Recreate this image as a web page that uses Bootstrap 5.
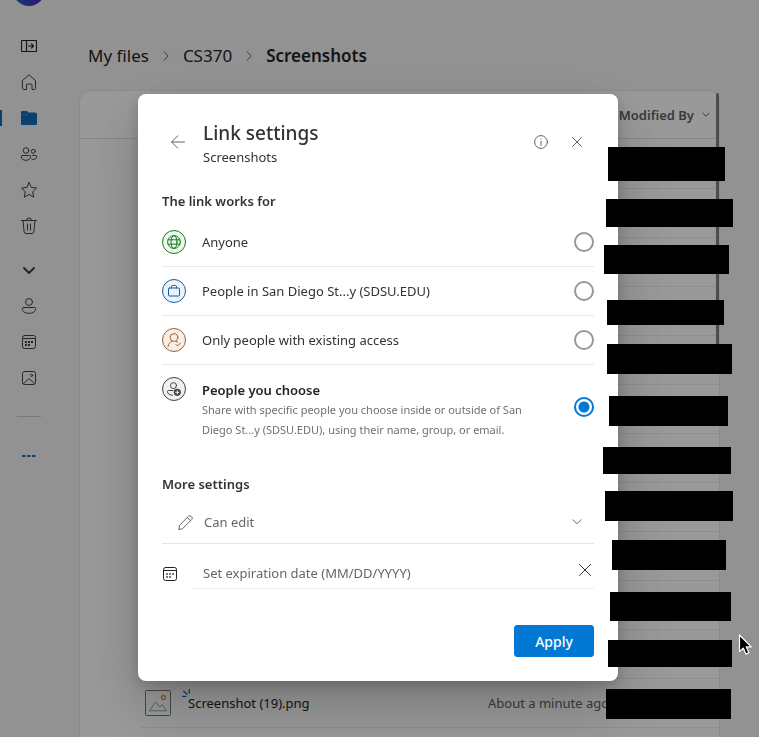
<!DOCTYPE html>
<html lang="en">
<head>
<meta charset="utf-8">
<meta name="viewport" content="width=device-width, initial-scale=1">
<title>Link settings</title>
<link href="https://cdn.jsdelivr.net/npm/bootstrap@5.3.0/dist/css/bootstrap.min.css" rel="stylesheet">
<style>
  body { font-family: "Noto Sans", "Open Sans", sans-serif; font-size: 13px; line-height: 20px; color: #333; background: #f3f3f3; }
  svg { display: block; fill: none; stroke: currentColor; stroke-linecap: round; stroke-linejoin: round; }
  button, select, input { font: inherit; color: inherit; }

  .side-rail { width: 58px; color: #424242; }
  .avatar { width: 32px; height: 32px; margin: -26px 0 22px; background: linear-gradient(90deg, #2a5ad0, #4a2ab0); }
  .rail-link { width: 58px; height: 36px; color: inherit; }
  .rail-link.active { color: #0f6cbd; }
  .rail-link.active::before { content: ""; position: absolute; left: 0; top: 10px; width: 2px; height: 16px; background: #0f6cbd; }
  .rail-toggle { margin-top: 8px; }
  .rail-line { width: 24px; height: 1px; margin: 20px 0 21px; background: #c8c8c8; }

  .files-area { padding: 42px 39px 0 21px; }
  .crumbs { font-size: 17px; line-height: 28px; margin: 0 0 20px 9px; gap: 13px; }
  .crumbs a, .crumbs .here { color: #242424; }
  .files-card { height: 800px; background: #fff; border: 1px solid #e8e8e8; border-radius: 12px; }
  .files-head { height: 48px; border-bottom: 1px solid #e0e0e0; color: #616161; padding-right: 9px; }
  .files-table { table-layout: fixed; color: #616161; }
  .files-table td { height: 49px; padding: 0; border-bottom: 1px solid #ededed; white-space: nowrap; }
  .files-table td:first-child { border-bottom: 0; }
  .col-pick { width: 60px; } .col-kind { width: 48px; } .col-who { width: 99px; } .col-when { width: 132px; }
  .file-link { color: #242424; }
  .file-pic { margin-left: 5px; }
  .new-spark { left: -6px; top: -5px; }
  .scroll-thumb { right: 0; top: 2px; width: 3px; height: 252px; border-radius: 2px; background: #808080; }

  .shade { background: rgba(0, 0, 0, .4); z-index: 1050; }
  .link-modal { padding-right: 3px; }
  .link-modal .modal-dialog { max-width: 480px; margin: 94px auto 24px; }
  .link-modal .modal-content { padding: 25px 24px 24px; border: 0; border-radius: 8px; color: #333; box-shadow: 0 26px 58px rgba(0, 0, 0, .22), 0 5px 14px rgba(0, 0, 0, .18); }
  .plain-btn { width: 32px; height: 32px; color: #616161; border: 0; background: none; padding: 0; }
  .dialog-head { gap: 9px; padding-right: 1px; margin-bottom: 24px; }
  .dialog-head .plain-btn { margin-bottom: 2px; }
  .dialog-title { font-size: 19px; line-height: 28px; font-weight: 500; margin: 0; }
  .section-name { font-size: 13px; line-height: 20px; font-weight: 600; margin: 0 0 7px; float: none; }
  .more-name { margin-top: 25px; }
  .choice { height: 49px; border-bottom: 1px solid #eaeaea; gap: 16px; }
  .choice-tall { height: 84px; border-bottom: 0; }
  .choice-tall .choice-text { padding-top: 15px; align-self: flex-start; }
  .choice-tall .choice-badge { margin-top: 12px; align-self: flex-start; }
  .choice-badge { width: 24px; height: 24px; border: 1px solid; flex: none; }
  .b-green { color: #107c10; background: #f1f7f1; } .b-blue { color: #115ea3; background: #ecf4fa; }
  .b-brown { color: #a0603a; background: #f8eee8; } .b-gray { color: #424242; background: #f0f0f0; }
  .choice-note { font-size: 11px; color: #707070; display: block; max-width: 340px; }
  .choice .form-check-input { width: 20px; height: 20px; border: 2px solid #979797; background: #fff; margin: 0; float: none; flex: none; box-shadow: none; }
  .choice .form-check-input:checked { border-color: #0078d4; background: radial-gradient(circle, #0078d4 5px, #fff 6px); }
  .perm-row { height: 43px; border-bottom: 1px solid #e6e6e6; padding: 0 12px 0 16px; color: #666; }
  .perm-row select { appearance: none; border: 0; background: none; padding: 0; margin-left: 11px; }
  .date-row { margin-top: 14px; gap: 13px; }
  .date-box { height: 31px; border-bottom: 1px solid #eee; padding-left: 12px; }
  .date-box input { border: 0; background: none; padding: 0; min-width: 0; outline: 0; }
  .date-box input::placeholder { color: #666; opacity: 1; }
  .clear-btn { width: 18px; height: 24px; color: #333; }
  .apply-btn { --bs-btn-bg: #0078d4; --bs-btn-border-color: #0078d4; --bs-btn-border-radius: 3px; width: 80px; height: 32px; margin-top: 36px; padding: 0; font-size: 14px; font-weight: 500; }

  /* Blocks that hide the names in the last column */
  .masks { z-index: 1060; pointer-events: none; }
  .masks i { position: absolute; background: #000; }
  .masks i:nth-child(1) { left: 608px; top: 147px; width: 117px; height: 34px; }
  .masks i:nth-child(2) { left: 606px; top: 199px; width: 127px; height: 28px; }
  .masks i:nth-child(3) { left: 604px; top: 245px; width: 125px; height: 29px; }
  .masks i:nth-child(4) { left: 607px; top: 300px; width: 117px; height: 25px; }
  .masks i:nth-child(5) { left: 607px; top: 344px; width: 125px; height: 30px; }
  .masks i:nth-child(6) { left: 609px; top: 396px; width: 119px; height: 30px; }
  .masks i:nth-child(7) { left: 603px; top: 447px; width: 128px; height: 27px; }
  .masks i:nth-child(8) { left: 605px; top: 491px; width: 128px; height: 30px; }
  .masks i:nth-child(9) { left: 612px; top: 540px; width: 114px; height: 30px; }
  .masks i:nth-child(10) { left: 610px; top: 592px; width: 121px; height: 29px; }
  .masks i:nth-child(11) { left: 608px; top: 640px; width: 124px; height: 27px; }
  .masks i:nth-child(12) { left: 606px; top: 689px; width: 125px; height: 30px; }
  .pointer { left: 738px; top: 634px; }
</style>
</head>
<body>
<div class="d-flex vh-100 overflow-hidden">
  <nav class="side-rail d-flex flex-column align-items-center flex-shrink-0" aria-label="Main">
    <div class="avatar rounded-circle flex-shrink-0"></div>
    <a href="#" class="rail-link d-flex align-items-center justify-content-center" aria-label="Expand"><svg width="16" height="12" viewBox="0 0 16 12" stroke-width="1.1" color="#222"><rect x=".5" y=".5" width="15" height="11" rx="1"/><path d="M5.500.5v11M7.500 6h5M10.500 4l2 2-2 2"/></svg></a>
    <a href="#" class="rail-link d-flex align-items-center justify-content-center" aria-label="Home"><svg width="16" height="16" viewBox="0 0 16 16"><path d="M1.500 6.500 8 .8l6.500 5.700v8a1 1 0 0 1-1 1h-2.500v-4.500a1 1 0 0 0-1-1H6.500a1 1 0 0 0-1 1v4.500h-3a1 1 0 0 1-1-1z"/></svg></a>
    <a href="#" class="rail-link active position-relative d-flex align-items-center justify-content-center" aria-label="My files"><svg width="16" height="14" viewBox="0 0 16 14" stroke="none"><path fill="currentColor" d="M0 2.200A2.200 2.200 0 0 1 2.200 0h2.600c.5 0 .9.200 1.300.5L7.400 1.600 5.700 3.100c-.2.200-.4.200-.6.200H0zM8.300 2h5.500A2.200 2.200 0 0 1 16 4.200v7.600A2.200 2.200 0 0 1 13.800 14H2.200A2.200 2.200 0 0 1 0 11.800V4.400h5.200c.5 0 .9-.2 1.300-.5z"/></svg></a>
    <a href="#" class="rail-link d-flex align-items-center justify-content-center" aria-label="Shared"><svg width="18" height="14" viewBox="0 0 18 14"><circle cx="6" cy="3.500" r="2.800"/><circle cx="13.300" cy="4.300" r="2"/><path d="M2.300 8.500h7.400a1 1 0 0 1 1 1c0 2.500-2 3.800-4.700 3.800S1.300 12 1.300 9.500a1 1 0 0 1 1-1zM12.700 8.500h3a1 1 0 0 1 1 1c0 2-1.500 3-3.700 3q-.6 0-1-.1"/></svg></a>
    <a href="#" class="rail-link d-flex align-items-center justify-content-center" aria-label="Favorites"><svg width="18" height="18" viewBox="0 0 18 18"><path d="m9 1.500 2.300 4.900 5.200.7-3.800 3.700 1 5.300L9 13.500l-4.700 2.600 1-5.300L1.500 7.100l5.200-.7z"/></svg></a>
    <a href="#" class="rail-link d-flex align-items-center justify-content-center" aria-label="Recycle bin"><svg width="16" height="18" viewBox="0 0 16 18"><path d="M.5 3.500h15M5.500 3.300a2.500 2.300 0 0 1 5 0M2 3.500l1.100 11.200A2 2 0 0 0 5 16.500h6a2 2 0 0 0 1.900-1.800L14 3.500M6.500 7v6M9.500 7v6"/></svg></a>
    <a href="#" class="rail-link rail-toggle d-flex align-items-center justify-content-center" aria-label="Show more"><svg width="12" height="8" viewBox="0 0 12 8" stroke-width="2"><path d="m1 2 5 5 5-5"/></svg></a>
    <a href="#" class="rail-link d-flex align-items-center justify-content-center" aria-label="People"><svg width="16" height="16" viewBox="0 0 16 16"><circle cx="8" cy="4" r="3.500"/><path d="M2.500 9.500h11a1.200 1.200 0 0 1 1.200 1.200c0 2.800-2.700 4.600-6.700 4.600s-6.700-1.800-6.700-4.600a1.200 1.200 0 0 1 1.200-1.200z"/></svg></a>
    <a href="#" class="rail-link d-flex align-items-center justify-content-center" aria-label="Meetings"><svg width="14" height="14" viewBox="0 0 14 14"><rect x=".5" y=".5" width="13" height="13" rx="2"/><path d="M.5 3.500h13"/><path stroke="none" fill="currentColor" d="M3 6h2v2H3zM6 6h2v2H6zM9 6h2v2H9zM3 9h2v2H3zM6 9h2v2H6z"/></svg></a>
    <a href="#" class="rail-link d-flex align-items-center justify-content-center" aria-label="Media"><svg width="14" height="14" viewBox="0 0 14 14"><rect x=".5" y=".5" width="13" height="13" rx="2"/><circle cx="9.600" cy="4.400" r="1.100"/><path d="m1.500 12.700 4.800-4.600a1 1 0 0 1 1.400 0l4.800 4.600"/></svg></a>
    <div class="rail-line"></div>
    <a href="#" class="rail-link d-flex align-items-center justify-content-center" aria-label="More places"><svg width="14" height="2" viewBox="0 0 14 2" color="#0f6cbd" stroke="none"><path fill="currentColor" d="M1 0h2v2H1zM6 0h2v2H6zM11 0h2v2h-2z"/></svg></a>
  </nav>

  <main class="files-area flex-grow-1">
    <nav aria-label="Breadcrumb">
      <ol class="crumbs list-unstyled d-flex align-items-center">
        <li><a href="#" class="text-decoration-none">My files</a></li>
        <li aria-hidden="true"><svg width="8" height="10" viewBox="0 0 8 10" color="#616161"><path d="m2 .8 4.200 4.200L2 9.200"/></svg></li>
        <li><a href="#" class="text-decoration-none">CS370</a></li>
        <li aria-hidden="true"><svg width="8" height="10" viewBox="0 0 8 10" color="#616161"><path d="m2 .8 4.200 4.200L2 9.200"/></svg></li>
        <li class="here fw-semibold" aria-current="page">Screenshots</li>
      </ol>
    </nav>
    <section class="files-card position-relative">
      <div class="files-head d-flex align-items-center justify-content-end gap-2 fw-semibold">Modified By <svg width="8" height="6" viewBox="0 0 8 6"><path d="m1 1.200 3 3 3-3"/></svg></div>
      <table class="files-table w-100">
        <colgroup><col class="col-pick"><col class="col-kind"><col><col class="col-when"><col class="col-who"></colgroup>
        <tbody>
          <tr><td></td><td></td><td></td><td></td><td></td></tr>
          <tr><td></td><td></td><td></td><td></td><td></td></tr>
          <tr><td></td><td></td><td></td><td></td><td></td></tr>
          <tr><td></td><td></td><td></td><td></td><td></td></tr>
          <tr><td></td><td></td><td></td><td></td><td></td></tr>
          <tr><td></td><td></td><td></td><td></td><td></td></tr>
          <tr><td></td><td></td><td></td><td></td><td></td></tr>
          <tr><td></td><td></td><td></td><td></td><td></td></tr>
          <tr><td></td><td></td><td></td><td></td><td></td></tr>
          <tr><td></td><td></td><td></td><td></td><td></td></tr>
          <tr><td></td><td></td><td></td><td></td><td></td></tr>
          <tr>
            <td></td>
            <td><svg class="file-pic" width="26" height="26" viewBox="0 0 26 26"><rect x=".5" y=".5" width="25" height="25" rx="1" stroke="#777"/><circle cx="18.500" cy="7.500" r="2" stroke="#e8912d" stroke-width="1.300"/><path d="M4.500 20.500 10.700 12l4 5.200 2.300-2.600 4.500 5.900z" stroke="#7fb5a5"/></svg></td>
            <td><span class="position-relative"><svg class="new-spark position-absolute" width="8" height="8" viewBox="0 0 8 8" color="#0f6cbd" stroke-width="1.300"><path d="M0 7.300h4M1.800 2.200 5 5.200M7.300 0v4"/></svg><a href="#" class="file-link text-decoration-none">Screenshot (19).png</a></span></td>
            <td>About a minute ago</td>
            <td></td>
          </tr>
        </tbody>
      </table>
      <div class="scroll-thumb position-absolute"></div>
    </section>
  </main>
</div>

<div class="shade position-fixed top-0 start-0 w-100 h-100"></div>

<div class="link-modal modal d-block" role="dialog" aria-labelledby="dialogTitle">
  <div class="modal-dialog">
    <form class="modal-content">
      <header class="dialog-head d-flex align-items-center">
        <button type="button" class="plain-btn d-flex align-items-center justify-content-center" aria-label="Back"><svg width="14" height="14" viewBox="0 0 14 14"><path d="M13.500 7H.8M6.800.8.600 7l6.200 6.200"/></svg></button>
        <div class="flex-grow-1">
          <h1 class="dialog-title" id="dialogTitle">Link settings</h1>
          <div>Screenshots</div>
        </div>
        <div class="d-flex gap-1">
          <button type="button" class="plain-btn d-flex align-items-center justify-content-center" aria-label="Information"><svg width="14" height="14" viewBox="0 0 14 14"><circle cx="7" cy="7" r="6.400"/><path d="M7 6.300v4M7 3.900V4"/></svg></button>
          <button type="button" class="plain-btn d-flex align-items-center justify-content-center" aria-label="Close"><svg width="10" height="10" viewBox="0 0 10 10"><path d="m.5.5 9 9M9.500.5l-9 9"/></svg></button>
        </div>
      </header>

      <fieldset>
        <legend class="section-name">The link works for</legend>
        <div class="choice d-flex align-items-center">
          <span class="choice-badge b-green rounded-circle d-flex align-items-center justify-content-center"><svg width="14" height="14" viewBox="0 0 14 14"><circle cx="7" cy="7" r="6.400"/><ellipse cx="7" cy="7" rx="3" ry="6.400"/><path d="M1.200 4.800h11.600M1.200 9.200h11.600"/></svg></span>
          <label class="flex-grow-1" for="anyone">Anyone</label>
          <input class="form-check-input" type="radio" name="scope" id="anyone">
        </div>
        <div class="choice d-flex align-items-center">
          <span class="choice-badge b-blue rounded-circle d-flex align-items-center justify-content-center"><svg width="12" height="12" viewBox="0 0 12 12"><rect x=".5" y="3" width="11" height="8" rx="1"/><path d="M3.500 3V1.500a1 1 0 0 1 1-1h3a1 1 0 0 1 1 1V3"/></svg></span>
          <label class="flex-grow-1" for="org">People in San Diego St...y (SDSU.EDU)</label>
          <input class="form-check-input" type="radio" name="scope" id="org">
        </div>
        <div class="choice d-flex align-items-center">
          <span class="choice-badge b-brown rounded-circle d-flex align-items-center justify-content-center"><svg width="14" height="14" viewBox="0 0 14 14"><circle cx="7" cy="4.500" r="3.800"/><path d="M1 13.500c.3-2.500 1.700-4.300 4-5.200M9 11.500l1.500 1.500L13.500 10M9 8.300l1.500 1"/></svg></span>
          <label class="flex-grow-1" for="existing">Only people with existing access</label>
          <input class="form-check-input" type="radio" name="scope" id="existing">
        </div>
        <div class="choice choice-tall d-flex align-items-center">
          <span class="choice-badge b-gray rounded-circle d-flex align-items-center justify-content-center"><svg width="14" height="14" viewBox="0 0 14 14"><circle cx="6.500" cy="3.600" r="3"/><path d="M6 8.500H1.500a1 1 0 0 0-1 1c0 2.300 2 3.600 5 3.800"/><circle cx="10.300" cy="10.300" r="3.200" fill="currentColor"/><path d="M10.300 8.700v3.200M8.700 10.300h3.200" stroke="#f0f0f0"/></svg></span>
          <label class="choice-text flex-grow-1" for="chosen"><span class="fw-semibold text-dark d-block">People you choose</span><span class="choice-note">Share with specific people you choose inside or outside of San Diego St...y (SDSU.EDU), using their name, group, or email.</span></label>
          <input class="form-check-input" type="radio" name="scope" id="chosen" checked>
        </div>
      </fieldset>

      <h2 class="section-name more-name">More settings</h2>
      <div class="perm-row d-flex align-items-center">
        <svg width="15" height="15" viewBox="0 0 15 15"><path d="M.8 14.200l.8-4L10.500 1.300a1.900 1.900 0 0 1 2.700 0l.5.500a1.900 1.900 0 0 1 0 2.700L4.800 13.400zM9.300 2.500l3.200 3.200"/></svg>
        <select class="flex-grow-1" aria-label="Permission"><option>Can edit</option><option>Can view</option></select>
        <svg width="10" height="6" viewBox="0 0 10 6"><path d="m1 .8 4 4 4-4"/></svg>
      </div>
      <div class="date-row d-flex align-items-center">
        <svg width="16" height="14" viewBox="-1 0 16 14" color="#222"><rect x=".5" y=".5" width="13" height="13" rx="2"/><path d="M.5 3.500h13"/><path d="M4 7h.1M7 7h.1M10 7h.1M4 10h.1M7 10h.1" stroke-width="1.500" stroke-linecap="square"/></svg>
        <div class="date-box d-flex flex-grow-1">
          <input class="flex-grow-1" type="text" placeholder="Set expiration date (MM/DD/YYYY)" aria-label="Expiration date">
          <button type="button" class="plain-btn clear-btn d-flex align-items-center justify-content-center" aria-label="Clear date"><svg width="12" height="12" viewBox="0 0 12 12"><path d="m.5.5 11 11M11.500.5l-11 11"/></svg></button>
        </div>
      </div>
      <button type="submit" class="apply-btn btn btn-primary align-self-end">Apply</button>
    </form>
  </div>
</div>

<div class="masks position-fixed top-0 start-0" aria-hidden="true">
  <i></i><i></i><i></i><i></i><i></i><i></i><i></i><i></i><i></i><i></i><i></i><i></i>
  <svg class="pointer position-absolute" width="14" height="22" viewBox="0 0 14 22"><path d="M1.500 1v16.500l3.800-3.400 2.600 6 3-1.300-2.600-5.900h4.900z" fill="#000" stroke="#fff" stroke-width="1.200"/></svg>
</div>
<script src="https://cdn.jsdelivr.net/npm/bootstrap@5.3.0/dist/js/bootstrap.bundle.min.js"></script>
</body>
</html>
